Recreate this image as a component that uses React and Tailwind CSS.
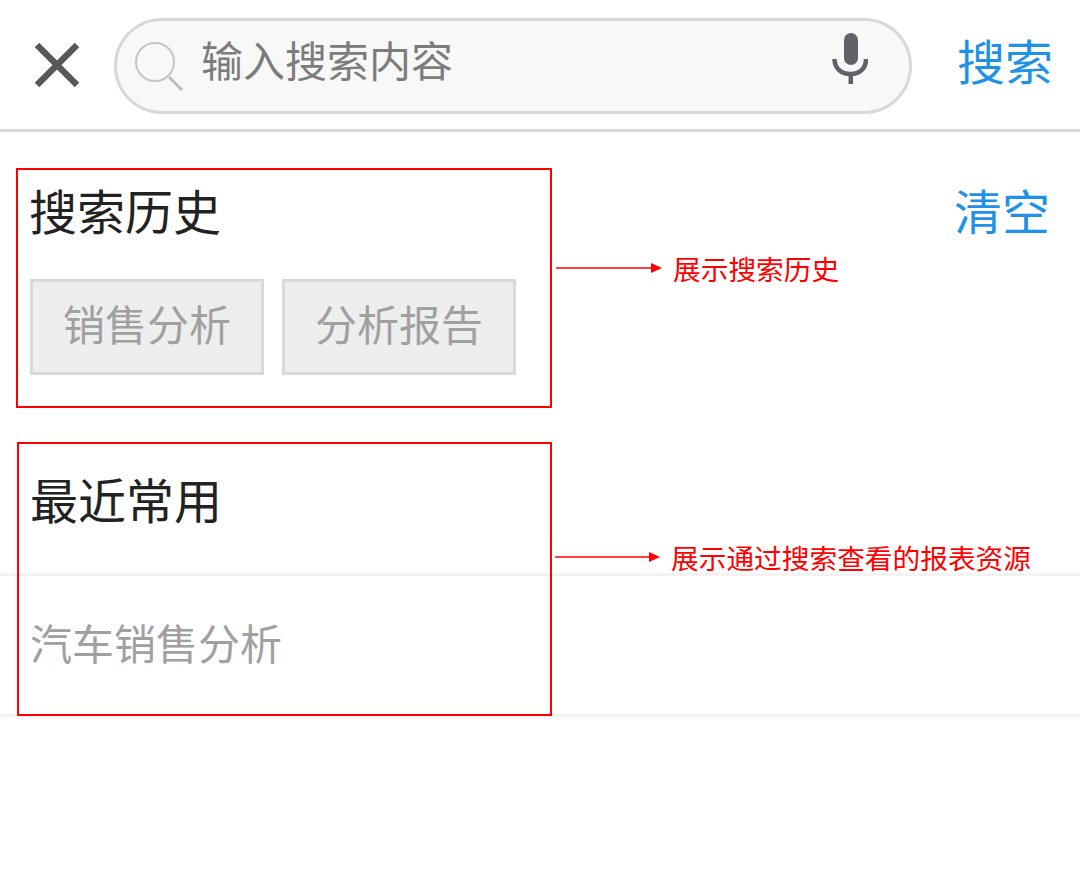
import React from "react";

const cjk = "font-['Liberation_Sans','Noto_Sans_CJK_SC',sans-serif]";

const Note = ({ className, width, text }) => (
  <div className={`absolute flex items-center ${className}`}>
    <svg width={width} height="12" viewBox={`0 0 ${width} 12`} className="shrink-0 mb-[6px]">
      <line x1="0" y1="6" x2={width - 8} y2="6" stroke="#ff0000" strokeWidth="1.6" />
      <polygon points={`${width - 11},1 ${width},6 ${width - 11},11`} fill="#ff0000" />
    </svg>
    <span className="ml-[11px] text-[27.7px] leading-[36px] text-[#ff0000] whitespace-nowrap">{text}</span>
  </div>
);

export default function App() {
  return (
    <div className={`relative w-[1080px] h-[896px] bg-white overflow-hidden ${cjk}`}>
      {/* search bar */}
      <div className="flex items-center h-[132px] pt-[3px] border-b-[3px] border-[#d9d9d9]">
        <svg width="46" height="46" viewBox="0 0 46 46" className="ml-[34px] mb-[3px] shrink-0">
          <path d="M3 3 L43 43 M43 3 L3 43" stroke="#585858" strokeWidth="6.5" fill="none" />
        </svg>
        <div className="flex items-center ml-[34px] w-[798px] h-[96px] rounded-full border-[3px] border-[#d8d8d8] bg-[#f8f8f8]">
          <svg width="50" height="52" viewBox="0 0 50 52" className="ml-[16px] shrink-0">
            <circle cx="22" cy="22" r="19" stroke="#c4c4c4" strokeWidth="2" fill="none" />
            <path d="M36 37 L49 50" stroke="#bdbdbd" strokeWidth="3" fill="none" />
          </svg>
          <span className="ml-[18px] mb-[6px] text-[42px] leading-none text-[#7c7c7c]">输入搜索内容</span>
          <svg width="36" height="51" viewBox="0 0 36 51" className="ml-auto mr-[41px] mb-[15px] shrink-0">
            <rect x="12" y="0" width="14" height="32" rx="7" fill="#5f6268" />
            <path d="M2.5 26 C2.5 36 10 41 18.5 41 C27 41 34 36 34 26" stroke="#5f6268" strokeWidth="4.5" fill="none" />
            <rect x="16.5" y="41" width="4.5" height="10" fill="#5f6268" />
          </svg>
        </div>
        <span className="ml-[45px] mb-[4px] text-[48px] leading-none text-[#1f92e8]">搜索</span>
      </div>

      {/* search history */}
      <div className="flex justify-between items-start pl-[29px] pr-[30px] pt-[54px]">
        <h2 className="text-[48px] leading-[56px] font-normal text-[#222222]">搜索历史</h2>
        <span className="text-[48px] leading-[56px] text-[#1f92e8]">清空</span>
      </div>
      <div className="flex gap-[18px] pl-[30px] mt-[37px]">
        {["销售分析", "分析报告"].map((tag) => (
          <div
            key={tag}
            className="flex items-center justify-center w-[234px] h-[96px] border-[3px] border-[#d9d9d9] bg-[#eeeeee] text-[42px] leading-none text-[#a0a0a0]"
          >
            {tag}
          </div>
        ))}
      </div>

      {/* recent */}
      <h2 className="pl-[30px] mt-[100px] text-[48px] leading-[56px] font-normal text-[#222222]">最近常用</h2>
      <div className="mt-[42px] border-y-[3px] border-[#f3f3f3] h-[144px] flex items-center pl-[30px] pt-[2px]">
        <span className="text-[42px] leading-none text-[#a0a0a0]">汽车销售分析</span>
      </div>

      {/* annotations */}
      <div className="absolute left-[16px] top-[168px] w-[536px] h-[240px] border-2 border-[#ff0000]" />
      <div className="absolute left-[17px] top-[442px] w-[535px] h-[274px] border-2 border-[#ff0000]" />
      <Note className="left-[556px] top-[253px]" width={106} text="展示搜索历史" />
      <Note className="left-[555px] top-[542px]" width={105} text="展示通过搜索查看的报表资源" />
    </div>
  );
}
